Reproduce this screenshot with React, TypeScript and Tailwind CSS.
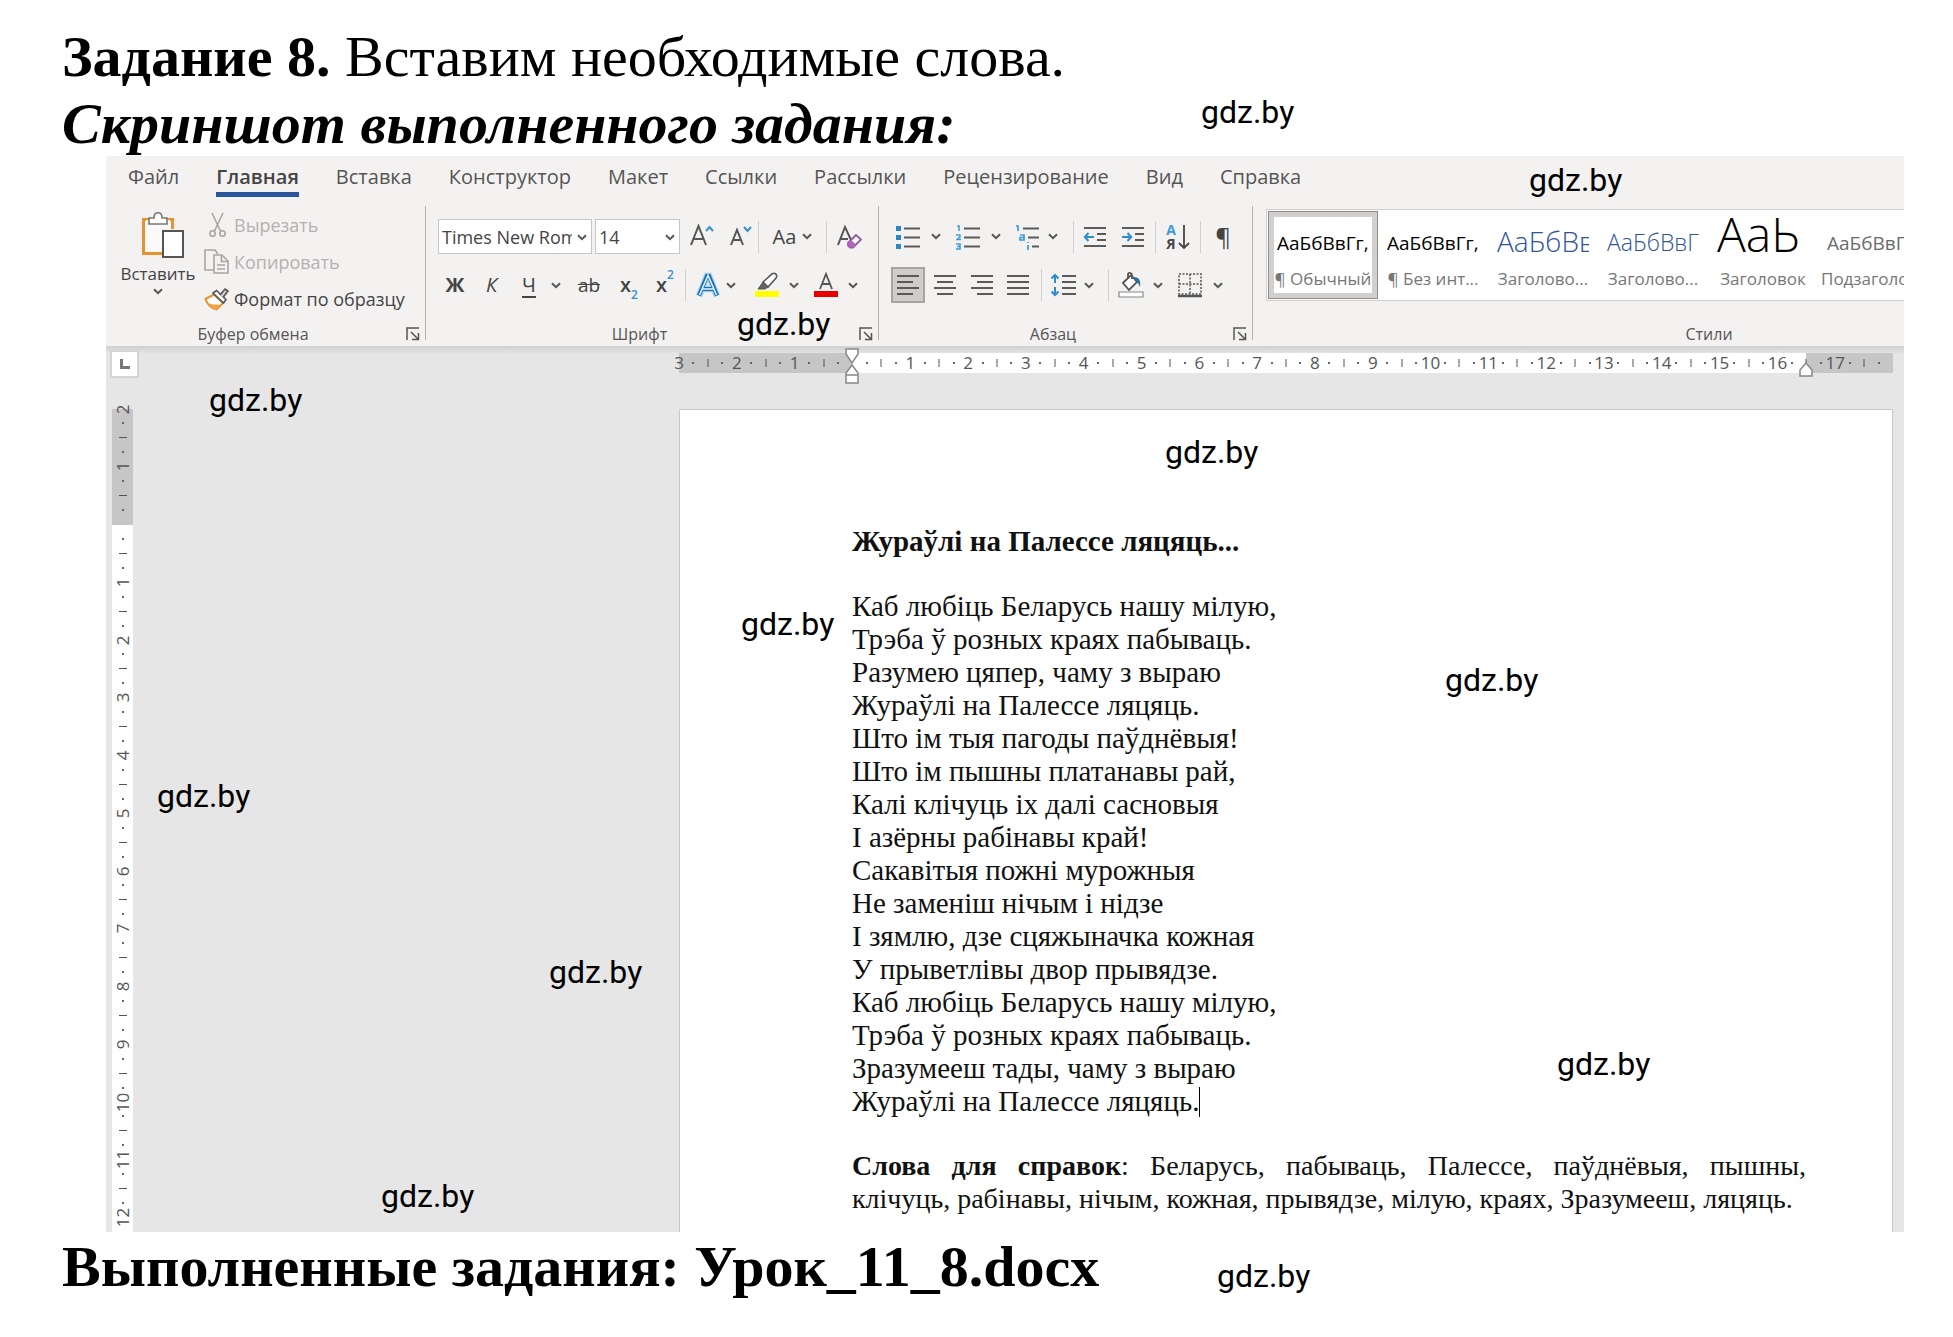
import type { ReactNode } from "react";

const CHROME = "font-['Open_Sans','Noto_Sans',sans-serif]";

const TABS = [
  "Файл",
  "Главная",
  "Вставка",
  "Конструктор",
  "Макет",
  "Ссылки",
  "Рассылки",
  "Рецензирование",
  "Вид",
  "Справка",
];

const STYLES = [
  { name: "¶ Обычный", sample: "АаБбВвГг,", look: "text-[19px] leading-[44px] text-black", active: true },
  { name: "¶ Без инт...", sample: "АаБбВвГг,", look: "text-[19px] leading-[44px] text-black" },
  { name: "Заголово...", sample: "АаБбВв", look: "text-[28px] leading-[40px] font-light text-[#2f5496]" },
  { name: "Заголово...", sample: "АаБбВвГ", look: "text-[23px] leading-[42px] font-light text-[#2f5496]" },
  { name: "Заголовок", sample: "АаЬ", look: "text-[48px] leading-[26px] font-light text-black" },
  { name: "Подзаголовок", sample: "АаБбВвГг", look: "text-[19px] leading-[44px] text-[#6b6b6b]" },
];

const POEM = [
  "Каб любіць Беларусь нашу мілую,",
  "Трэба ў розных краях пабываць.",
  "Разумею цяпер, чаму з выраю",
  "Жураўлі на Палессе ляцяць.",
  "Што ім тыя пагоды паўднёвыя!",
  "Што ім пышны платанавы рай,",
  "Калі клічуць іх далі сасновыя",
  "І азёрны рабінавы край!",
  "Сакавітыя пожні мурожныя",
  "Не заменіш нічым і нідзе",
  "І зямлю, дзе сцяжыначка кожная",
  "У прыветлівы двор прывядзе.",
  "Каб любіць Беларусь нашу мілую,",
  "Трэба ў розных краях пабываць.",
  "Зразумееш тады, чаму з выраю",
];

const WATERMARKS = [
  "left-[1201px] top-[93px]",
  "left-[1529px] top-[161px]",
  "left-[737px] top-[305px]",
  "left-[209px] top-[381px]",
  "left-[1165px] top-[433px]",
  "left-[741px] top-[605px]",
  "left-[1445px] top-[661px]",
  "left-[157px] top-[777px]",
  "left-[549px] top-[953px]",
  "left-[1557px] top-[1045px]",
  "left-[381px] top-[1177px]",
  "left-[1217px] top-[1257px]",
];

function Tool({ label, className, children }: { label: string; className: string; children: ReactNode }) {
  return (
    <button
      type="button"
      aria-label={label}
      className={`flex h-9 shrink-0 items-center justify-center text-[#444] ${className}`}
    >
      {children}
    </button>
  );
}

function Chevron() {
  return (
    <svg width="10" height="7" viewBox="0 0 10 7" fill="none" stroke="#555" strokeWidth="2" className="shrink-0">
      <path d="M1 1.200 5 5.200 9 1.200" />
    </svg>
  );
}

function Sep({ className = "" }: { className?: string }) {
  return <div className={`h-8 w-px shrink-0 bg-[#d2d0ce] ${className}`} />;
}

function GroupRule() {
  return <div className="h-[134px] w-px shrink-0 bg-[#b5b3b1]" />;
}

function GroupLabel({ text }: { text: string }) {
  return (
    <div className="flex h-5 items-center">
      <span className="flex-1 text-center text-base leading-5 text-[#555]">{text}</span>
      <button type="button" aria-label={`${text}: параметры`} className="flex w-[25px] justify-center">
        <svg width="14" height="14" viewBox="0 0 14 14" fill="none" stroke="#555" strokeWidth="1.500">
          <path d="M1 13V1h12M5 5l7 7M12.500 6v6.500H6" />
        </svg>
      </button>
    </div>
  );
}

function Lines({ rows }: { rows: [number, number][] }) {
  return (
    <svg width="24" height="24" viewBox="0 0 24 24" stroke="#5a5a5a" strokeWidth="2">
      {rows.map(([a, b], i) => (
        <path key={i} d={`M${a} ${3 + i * 6}H${b}`} />
      ))}
    </svg>
  );
}

function ClipboardGroup() {
  return (
    <section aria-label="Буфер обмена" className="w-[319px] shrink-0">
      <div className="flex h-[111px]">
        <button
          type="button"
          className="flex w-[98px] flex-col items-center pt-1.5 pl-1.5 text-[17px] leading-6 text-[#444]"
        >
          <svg width="52" height="48" viewBox="0 0 52 48" fill="none">
            <path d="M11.500 7.500h29v34h-29z" fill="#fafafa" stroke="#e8912d" strokeWidth="3" />
            <path d="M14 8h24v30H14z" fill="#fafafa" />
            <path d="M17 12V6h5c0-7 8-7 8 0h5v6z" fill="#fff" stroke="#777" strokeWidth="1.600" />
            <path d="M30 17h22v30H30z" fill="#f3f2f1" />
            <path d="M31 19h20v26H31z" fill="#fff" stroke="#555" strokeWidth="2" />
          </svg>
          <span className="pt-0.5">Вставить</span>
          <span className="pt-0.5">
            <Chevron />
          </span>
        </button>
        <div className="flex flex-col text-lg text-[#444]">
          <button type="button" disabled className="flex h-[37px] items-center gap-[5px] text-[#b3b1af]">
            <svg width="25" height="26" viewBox="0 0 25 26" fill="none" stroke="#a8a6a4" strokeWidth="1.600">
              <path d="m8 1 8.500 18M19 1l-8.500 18" />
              <circle cx="8.500" cy="21.500" r="2.700" />
              <circle cx="18.500" cy="21.500" r="2.700" />
            </svg>
            Вырезать
          </button>
          <button type="button" disabled className="flex h-[37px] items-center gap-[5px] text-[#b3b1af]">
            <svg width="25" height="26" viewBox="0 0 25 26" fill="none" stroke="#a8a6a4" strokeWidth="1.600">
              <path d="M10 21H1V1h10l3 4" />
              <path d="M10 6h8l6 6v12H10z" fill="#f3f2f1" />
              <path d="M17.500 6v6.500H24M13 16h8M13 20h8" />
            </svg>
            Копировать
          </button>
          <button type="button" className="flex h-[37px] items-center gap-[5px]">
            <svg width="25" height="24" viewBox="0 0 25 24" fill="none">
              <path d="M1.500 12 10 7.500l9 8.500-6.500 6.500C7 21 3 17 1.500 12z" fill="#fff" stroke="#e8912d" strokeWidth="2" />
              <path d="M4 16c4 2 8 1 12 2l-4 4.500C8 21 6 19 4 16z" fill="#f0a64a" />
              <path d="m9 6 3.500-2.500 9.500 9-2.500 3.500z" fill="#fff" stroke="#555" strokeWidth="1.600" />
              <path d="m16 8 5-6 3 2-5 6.500" fill="#ccc" stroke="#555" strokeWidth="1.600" />
            </svg>
            Формат по образцу
          </button>
        </div>
      </div>
      <div className="pt-[7px]">
        <GroupLabel text="Буфер обмена" />
      </div>
    </section>
  );
}

function Combo({ label, value, className }: { label: string; value: string; className: string }) {
  return (
    <div className={`relative h-[35px] shrink-0 border border-[#c8c6c4] bg-white ${className}`}>
      <select
        aria-label={label}
        defaultValue={value}
        className="h-full w-full appearance-none bg-transparent pr-[19px] pl-[3px] text-lg text-[#444]"
      >
        <option>{value}</option>
      </select>
      <span className="pointer-events-none absolute top-[14px] right-1">
        <Chevron />
      </span>
    </div>
  );
}

function FontGroup() {
  return (
    <section aria-label="Шрифт" className="w-[452px] shrink-0 pt-[13px]">
      <div className="flex h-[35px] items-center pl-3">
        <Combo label="Шрифт" value="Times New Roman" className="mr-[3px] w-[154px]" />
        <Combo label="Размер" value="14" className="w-[85px]" />
        <Tool label="Увеличить размер" className="w-[44px]">
          <svg width="24" height="26" viewBox="0 0 24 26" fill="none">
            <path d="M1 21 8.500 2 16 21M4 15h9" stroke="#555" strokeWidth="2" />
            <path d="m16 7 3.500-4L23 7" stroke="#3a8fc9" strokeWidth="2" />
          </svg>
        </Tool>
        <Tool label="Уменьшить размер" className="w-[34px]">
          <svg width="22" height="26" viewBox="0 0 22 26" fill="none">
            <path d="M1 21 7 6l6 15M3 16h8" stroke="#555" strokeWidth="2" />
            <path d="m14 3 3.500 4L21 3" stroke="#3a8fc9" strokeWidth="2" />
          </svg>
        </Tool>
        <Sep />
        <Tool label="Регистр" className="w-[67px] gap-1.5 text-xl">
          Aa
          <Chevron />
        </Tool>
        <Sep />
        <Tool label="Очистить формат" className="w-[44px]">
          <svg width="26" height="26" viewBox="0 0 26 26" fill="none">
            <path d="M2 21 9 3l6 13M5 15h7" stroke="#555" strokeWidth="2" />
            <path d="m12 19 8-8 5 4.500-8 8h-3l-2-2z" fill="#fff" stroke="#8a5a9c" strokeWidth="1.800" />
            <path d="m12 19 3-3 5 4.500-3 3h-3l-2-2z" fill="#b463c4" />
          </svg>
        </Tool>
      </div>
      <div className="mt-[13px] flex h-9 items-center pl-3 text-xl">
        <Tool label="Полужирный" className="w-[34px] font-bold">
          Ж
        </Tool>
        <Tool label="Курсив" className="w-[39px] italic">
          К
        </Tool>
        <Tool label="Подчёркнутый" className="w-9 underline underline-offset-4">
          Ч
        </Tool>
        <Tool label="Вид подчёркивания" className="w-[18px]">
          <Chevron />
        </Tool>
        <Tool label="Зачёркнутый" className="w-12 text-[19px] line-through">
          ab
        </Tool>
        <Tool label="Подстрочный" className="w-8 font-semibold">
          x<span className="self-end text-xs text-[#3a8fc9]">2</span>
        </Tool>
        <Tool label="Надстрочный" className="w-10 font-semibold">
          x<span className="self-start text-xs text-[#3a8fc9]">2</span>
        </Tool>
        <Sep />
        <Tool label="Эффекты" className="ml-1 w-9">
          <svg width="26" height="26" viewBox="0 0 26 26" fill="none">
            <path d="M4 24 12 4h2l8 20M8 17h10" stroke="#9fd0f3" strokeWidth="6.500" />
            <path d="M4 23.500 12 4h2l8 19.500M8 17h10" stroke="#1d6fb0" strokeWidth="4" />
            <path d="M4.500 23 13 3.500 21.500 23M8 17h10" stroke="#e8f4fc" strokeWidth="1.500" />
          </svg>
        </Tool>
        <Chevron />
        <Tool label="Цвет выделения" className="ml-[14px] w-[34px]">
          <svg width="26" height="26" viewBox="0 0 26 26" fill="none">
            <path d="M1 19h24v6H1z" fill="#ff0" />
            <path d="m9 10 9-8c3-2 6 1 4 4l-8 9z" fill="#fff" stroke="#555" strokeWidth="1.600" />
            <path d="m9 10 5 5-3 2H4z" fill="#666" stroke="#555" />
          </svg>
        </Tool>
        <Tool label="Выбор цвета выделения" className="w-5">
          <Chevron />
        </Tool>
        <Tool label="Цвет текста" className="w-11">
          <svg width="26" height="26" viewBox="0 0 26 26" fill="none">
            <path d="M1 19h24v6H1z" fill="#e60000" />
            <path d="m7 17 6-15 6 15M9 12h8" stroke="#555" strokeWidth="1.800" />
          </svg>
        </Tool>
        <Chevron />
      </div>
      <div className="pt-[21px]">
        <GroupLabel text="Шрифт" />
      </div>
    </section>
  );
}

function ParagraphGroup() {
  return (
    <section aria-label="Абзац" className="w-[373px] shrink-0 pt-[13px]">
      <div className="flex h-[35px] items-center pl-[14px]">
        <Tool label="Маркеры" className="w-[30px]">
          <svg width="24" height="26" viewBox="0 0 24 26">
            <path d="M0 2h5v5H0zM0 11h5v5H0zM0 20h5v5H0z" fill="#2f86c6" />
            <path d="M8 4.500h16M8 13.500h16M8 22.500h16" stroke="#5a5a5a" strokeWidth="2" />
          </svg>
        </Tool>
        <Tool label="Вид маркеров" className="w-[26px]">
          <Chevron />
        </Tool>
        <Tool label="Нумерация" className="w-[38px]">
          <svg width="24" height="26" viewBox="0 0 24 26" fill="none">
            <path d="M1 2h2v5M0 11h4v2L1 15.500h4M0 20h4v5H0M1 22.500h3" stroke="#3a9bd9" strokeWidth="1.500" />
            <path d="M8 4.500h16M8 13.500h16M8 22.500h16" stroke="#5a5a5a" strokeWidth="2" />
          </svg>
        </Tool>
        <Tool label="Вид нумерации" className="w-[18px]">
          <Chevron />
        </Tool>
        <Tool label="Многоуровневый список" className="w-[43px]">
          <svg width="24" height="26" viewBox="0 0 24 26" fill="none">
            <path d="M1 2h2v5M5 11h4v5H5v-2.500h4M13 18v1M13 21v5" stroke="#3a9bd9" strokeWidth="1.700" />
            <path d="M8 4.500h16M13 13.500h11M17 22.500h7" stroke="#5a5a5a" strokeWidth="2" />
          </svg>
        </Tool>
        <Chevron />
        <Sep className="ml-[15px]" />
        <Tool label="Уменьшить отступ" className="w-[42px]">
          <svg width="24" height="24" viewBox="0 0 24 24" fill="none">
            <path d="M1 3h22M14 9h9M14 15h9M1 21h22" stroke="#5a5a5a" strokeWidth="2" />
            <path d="M11 12H2M5.500 8 1.800 12l3.700 4" stroke="#2f8ccd" strokeWidth="2" />
          </svg>
        </Tool>
        <Tool label="Увеличить отступ" className="w-[34px]">
          <svg width="24" height="24" viewBox="0 0 24 24" fill="none">
            <path d="M1 3h22M14 9h9M14 15h9M1 21h22" stroke="#5a5a5a" strokeWidth="2" />
            <path d="M1 12h9M6.500 8l3.700 4-3.700 4" stroke="#2f8ccd" strokeWidth="2" />
          </svg>
        </Tool>
        <Sep className="ml-[5px]" />
        <Tool label="Сортировка" className="w-11 gap-0.5">
          <span className="flex flex-col text-sm leading-[14px] font-bold">
            <span className="text-[#3a9bd9]">А</span>
            <span>Я</span>
          </span>
          <svg width="12" height="26" viewBox="0 0 12 26" fill="none" stroke="#444" strokeWidth="1.800">
            <path d="M6 1v23M1 19l5 5 5-5" />
          </svg>
        </Tool>
        <Sep />
        <Tool label="Непечатаемые знаки" className="w-11 text-2xl">
          ¶
        </Tool>
      </div>
      <div className="mt-[13px] flex h-9 items-center pl-3">
        <Tool label="По левому краю" className="w-[34px] border-2 border-[#a6a4a2] bg-[#cfcdcb]">
          <Lines rows={[[1, 23], [1, 17], [1, 23], [1, 17]]} />
        </Tool>
        <Tool label="По центру" className="w-10">
          <Lines rows={[[1, 23], [4, 20], [1, 23], [4, 20]]} />
        </Tool>
        <Tool label="По правому краю" className="w-[34px]">
          <Lines rows={[[1, 23], [7, 23], [1, 23], [7, 23]]} />
        </Tool>
        <Tool label="По ширине" className="w-[38px]">
          <Lines rows={[[1, 23], [1, 23], [1, 23], [1, 23]]} />
        </Tool>
        <Sep className="ml-1" />
        <Tool label="Интервал" className="w-[42px]">
          <svg width="26" height="24" viewBox="0 0 26 24" fill="none">
            <path d="M12 3h14M12 9h14M12 15h14M12 21h14" stroke="#5a5a5a" strokeWidth="2" />
            <path d="M5 10V2M1.500 5.500 5 2l3.500 3.500M5 14v8M1.500 18.500 5 22l3.500-3.500" stroke="#2f8ccd" strokeWidth="2" />
          </svg>
        </Tool>
        <Chevron />
        <Sep className="ml-[14px]" />
        <Tool label="Заливка" className="w-11">
          <svg width="26" height="26" viewBox="0 0 26 26" fill="none">
            <path d="M1 20h24v5H1z" fill="#fff" stroke="#888" strokeWidth="1.200" />
            <path d="m5 11 8-8 6 7-8 8zM10 7V2c1-2 4-1 4 1v4" fill="#fff" stroke="#555" strokeWidth="1.800" />
            <path d="M15 5c6 0 8 3 7 10l-2-4-3-2z" fill="#2b6f94" />
          </svg>
        </Tool>
        <Chevron />
        <Tool label="Границы" className="ml-1.5 w-[42px]">
          <svg width="24" height="26" viewBox="0 0 24 26" fill="none" stroke="#555">
            <path d="M1 2h22v20H1zM12 2v20M1 12h22" strokeWidth="1.500" strokeDasharray="2 1.500" />
            <path d="M0 24h24" strokeWidth="2.500" />
          </svg>
        </Tool>
        <Tool label="Вид границ" className="w-[14px]">
          <Chevron />
        </Tool>
      </div>
      <div className="pt-[21px]">
        <GroupLabel text="Абзац" />
      </div>
    </section>
  );
}

function StylesGroup() {
  return (
    <section aria-label="Стили" className="min-w-0 flex-1 overflow-hidden pt-[3px] pl-[13px]">
      <div className="flex h-[92px] w-max border border-[#d2d0ce] bg-white p-px">
        {STYLES.map((s, i) => (
          <button
            key={i}
            type="button"
            className={`flex h-[88px] w-[110px] shrink-0 flex-col overflow-hidden px-2 whitespace-nowrap ${
              s.active ? "border border-[#8f8d8b] shadow-[inset_0_0_0_5px_#d2d0ce]" : "border border-transparent"
            }`}
          >
            <span className="flex h-[55px] w-full items-start overflow-hidden pt-[9px]">
              <span className={s.look}>{s.sample}</span>
            </span>
            <span className="-mx-1.5 text-center text-[17px] leading-6 text-[#777]">{s.name}</span>
          </button>
        ))}
      </div>
      <div className="pt-[23px] pl-[248px] text-center text-base leading-5 text-[#555]">Стили</div>
    </section>
  );
}

function Ribbon() {
  return (
    <header className={`bg-[#f3f2f1] ${CHROME}`}>
      <nav className="flex h-[41px] gap-[37px] pl-[22px]">
        {TABS.map((t) => (
          <a
            key={t}
            href="#"
            className={`flex flex-col justify-between pt-[7px] text-xl leading-7 ${
              t === "Главная" ? "font-semibold text-[#444]" : "text-[#555]"
            }`}
          >
            {t}
            {t === "Главная" && <span className="h-[5px] bg-[#2b579a]" />}
          </a>
        ))}
      </nav>
      <div className="flex h-[149px] pt-[9px]">
        <ClipboardGroup />
        <GroupRule />
        <FontGroup />
        <GroupRule />
        <ParagraphGroup />
        <GroupRule />
        <StylesGroup />
      </div>
    </header>
  );
}

/* A quarter-centimetre mark: a number on whole centimetres, a line on halves, a dot otherwise. */
function Mark({ quarter, vertical = false }: { quarter: number; vertical?: boolean }) {
  if (quarter === 0) return null;
  if (quarter % 4 === 0) return <>{Math.abs(quarter / 4)}</>;
  if (quarter % 2 === 0) return <span className={vertical ? "h-px w-2 bg-[#555]" : "h-2 w-px bg-[#555]"} />;
  return <span className="size-[2px] bg-[#666]" />;
}

function HorizontalRuler() {
  return (
    <div className="mt-[7px] flex h-5 text-[17px] leading-5 text-[#555]">
      {Array.from({ length: 84 }, (_, i) => i - 12).map((q) => (
        <div key={q} className={`relative flex w-0 flex-1 ${q < 0 || q >= 66 ? "bg-[#c6c6c6]" : "bg-white"}`}>
          <span className="flex h-5 w-max shrink-0 -translate-x-1/2 items-center">
            <Mark quarter={q} />
          </span>
          {q === 0 && (
            <svg
              width="16"
              height="36"
              viewBox="0 0 16 36"
              fill="#fff"
              stroke="#888"
              strokeWidth="1.500"
              className="absolute -top-[5px] -left-2 z-10"
            >
              <path d="M2 1h12v5l-6 9-6-9zM8 17l6 8v10H2V25zM2 27h12" />
            </svg>
          )}
          {q === 66 && (
            <svg
              width="16"
              height="15"
              viewBox="0 0 16 15"
              fill="#fff"
              stroke="#888"
              strokeWidth="1.500"
              className="absolute top-[9px] -left-2 z-10"
            >
              <path d="M8 1l6 7v6H2V8z" />
            </svg>
          )}
        </div>
      ))}
    </div>
  );
}

function VerticalRuler() {
  return (
    <div className="ml-1.5 flex w-[21px] flex-col text-[17px] leading-none text-[#555]">
      {Array.from({ length: 57 }, (_, i) => i - 8).map((q) => (
        <div
          key={q}
          className={`flex min-h-0 shrink grow basis-[0px] items-start justify-center ${
            q < 0 ? "bg-[#c6c6c6]" : "bg-white"
          }`}
        >
          <span className="-my-[10px] flex size-5 shrink-0 items-center justify-center">
            {q % 4 === 0 ? (
              <span className="-rotate-90">
                <Mark quarter={q} vertical />
              </span>
            ) : (
              <span className="relative z-10">
                <span className="flex">
                  <Mark quarter={q} vertical />
                </span>
              </span>
            )}
          </span>
        </div>
      ))}
    </div>
  );
}

function Page() {
  return (
    <article className="border-t border-r border-l border-[#c8c8c8] bg-white pt-[115px] pr-[86px] pb-[17px] pl-[172px] font-['Liberation_Serif',serif] text-[29px] leading-[33px] text-[#111]">
      <h2 className="mb-[32px] font-bold">Жураўлі на Палессе ляцяць...</h2>
      {POEM.map((line, i) => (
        <p key={i}>{line}</p>
      ))}
      <p className="mb-[31px] flex items-center">
        Жураўлі на Палессе ляцяць.
        <span className="h-[30px] w-px bg-black" />
      </p>
      <p className="text-justify text-[28px]">
        <b>Слова для справок</b>: Беларусь, пабываць, Палессе, паўднёвыя, пышны, клічуць, рабінавы, нічым, кожная,
        прывядзе, мілую, краях, Зразумееш, ляцяць.
      </p>
    </article>
  );
}

function Workspace() {
  return (
    <div className="bg-[#e6e6e6]">
      <div
        className={`grid h-[63px] grid-cols-[minmax(0,573fr)_minmax(0,1214fr)_11px] bg-linear-to-b from-[#cfcfcf] to-[#e6e6e6] to-[8px] ${CHROME}`}
      >
        <div className="pt-1 pl-1">
          <button
            type="button"
            aria-label="Табуляция"
            className="flex h-[28px] w-[29px] items-center justify-center border-2 border-[#d4d4d4] bg-white"
          >
            <svg width="10" height="10" viewBox="0 0 10 10" fill="none" stroke="#777" strokeWidth="3">
              <path d="M1.500 0v8.500H10" />
            </svg>
          </button>
        </div>
        <HorizontalRuler />
      </div>
      <div className="grid grid-cols-[minmax(0,573fr)_minmax(0,1214fr)_11px]">
        <div className={`flex ${CHROME}`}>
          <VerticalRuler />
        </div>
        <Page />
      </div>
    </div>
  );
}

export default function App() {
  return (
    <main className="relative overflow-hidden bg-white pt-[23px] pb-9 font-['Liberation_Serif',serif] text-[58px] leading-[67px] text-black">
      <h1 className="pl-[62px]">
        <b>Задание 8.</b> Вставим необходимые слова.
      </h1>
      <p className="-mb-px pl-[62px] font-bold italic">Скриншот выполненного задания:</p>
      <div className="relative mr-[49px] ml-[106px] overflow-hidden text-base">
        <Ribbon />
        <Workspace />
      </div>
      <p className="pt-px pl-[62px] font-bold">Выполненные задания: Урок_11_8.docx</p>
      {WATERMARKS.map((place) => (
        <span
          key={place}
          className={`pointer-events-none absolute font-['Roboto',sans-serif] text-[32px] leading-[38px] ${place}`}
        >
          gdz.by
        </span>
      ))}
    </main>
  );
}
